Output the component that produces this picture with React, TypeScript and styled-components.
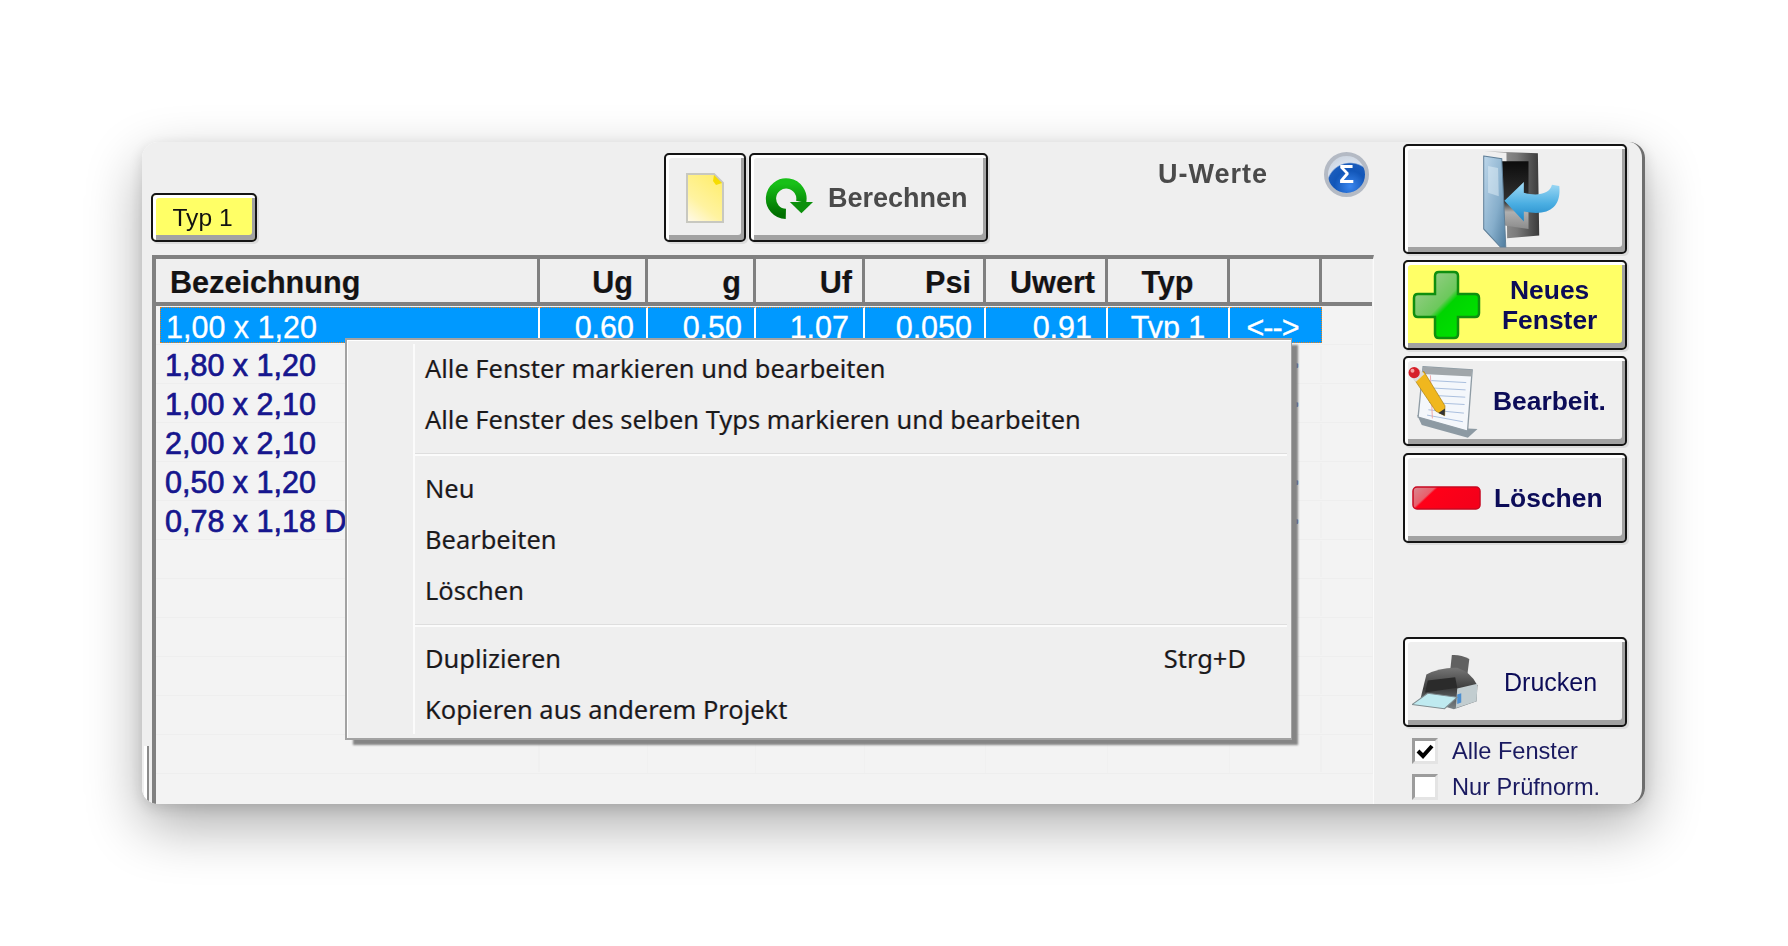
import React from "react"

import styled, { createGlobalStyle, css } from "styled-components"

const COLUMNS = "384px 108px 108px 109px 121px 122px 122px 92px 1fr"

const FRINGE = "-0.6px 0 rgba(200, 60, 0, 0.22), 0.6px 0 rgba(0, 80, 220, 0.22)"

const GlobalStyle = createGlobalStyle`
    html, body {
        margin: 0;
        background: #fff;
        overflow: hidden;
    }
    body {
        font-family: "Liberation Sans", Arial, sans-serif;
    }
`

const Page = styled.div`
    width: 1788px;
    height: 946px;
    padding: 142px 0 0 142px;
    box-sizing: border-box;
`

const Window = styled.div`
    position: relative;
    width: 1503px;
    height: 662px;
    border-radius: 16px;
    box-shadow: 0 22px 56px rgba(0, 0, 0, 0.32), 0 4px 14px rgba(0, 0, 0, 0.12);
`

const Surface = styled.div`
    display: flex;
    box-sizing: border-box;
    height: 100%;
    padding: 2px 15px 0 10px;
    overflow: hidden;
    background: #efefef;
    border-radius: 16px;
    border-right: 3px solid #6e6e6e;
    filter: blur(0.5px);

    &::before {
        content: "";
        position: absolute;
        left: 2px;
        bottom: 0;
        width: 3px;
        height: 58px;
        background: #fff;
        border-right: 2px solid #8a8a8a;
    }
`

const Main = styled.div`
    display: flex;
    flex-direction: column;
    width: 1222px;
    flex: none;
`

const Toolbar = styled.div`
    display: flex;
    align-items: flex-end;
    height: 111px;
    flex: none;
    padding-bottom: 13px;
    box-sizing: border-box;
`

const raised = css`
    box-sizing: border-box;
    border: 2px solid #141414;
    border-radius: 5px;
    box-shadow:
        inset 3px 3px 0 #fff,
        inset -3px -5px 0 #a2a2a2,
        2px 2px 0 #dcdcdc;
`

const TypeButton = styled.div`
    ${raised}
    display: flex;
    align-items: center;
    justify-content: center;
    width: 106px;
    height: 49px;
    margin-left: -1px;
    padding-right: 3px;
    background: #ffff66;
    color: #111;
    font-size: 24.6px;
`

const ToolGroup = styled.div`
    display: flex;
    gap: 3px;
    margin-left: 407px;
`

const ToolButton = styled.div<{ $wide?: boolean }>`
    ${raised}
    display: flex;
    align-items: center;
    justify-content: ${p => (p.$wide ? "flex-start" : "center")};
    gap: 15px;
    width: ${p => (p.$wide ? 239 : 82)}px;
    height: 89px;
    padding: ${p => (p.$wide ? "2px 0 0 14px" : "0")};
    background: #efefef;
    color: #4a4a4a;
    font-size: 27px;
    font-weight: 700;
`

const ValuesInfo = styled.div`
    display: flex;
    align-items: center;
    align-self: flex-start;
    gap: 56px;
    height: 60px;
    margin-left: 170px;
    color: #4a4a4a;
    font-size: 27px;
    font-weight: 700;
    letter-spacing: 1px;
`

const SigmaBadge = styled.div`
    display: flex;
    align-items: center;
    justify-content: center;
    width: 45px;
    height: 45px;
    box-sizing: border-box;
    border: 4px solid #b4bac4;
    border-radius: 50%;
    background: radial-gradient(circle at 60% 82%, #3a86ee 0%, #1256b8 42%, #1a5cbc 60%, #d7e0ec 64%, #c4ccd6 100%);
    color: #fff;
    font-size: 25px;
    font-weight: 700;
    letter-spacing: 0;
`

const Table = styled.div`
    position: relative;
    flex: 1;
    box-sizing: border-box;
    border-top: 4px solid #808080;
    border-left: 4px solid #808080;
    border-right: 1px solid #fbfbfb;
    background: #f3f3f3;
`

const HeadRow = styled.div`
    display: grid;
    grid-template-columns: ${COLUMNS};
    height: 47px;
    box-sizing: border-box;
    border-bottom: 4px solid #808080;
    margin-right: 1px;
    background: #efefef;
`

const HeadCell = styled.div<{ $align?: string; $pad?: number; $last?: boolean }>`
    box-sizing: border-box;
    padding: 2px ${p => p.$pad ?? 14}px 0;
    border-right: ${p => (p.$last ? "none" : "3px solid #808080")};
    color: #141414;
    font-size: 30.6px;
    font-weight: 700;
    line-height: 43px;
    text-align: ${p => p.$align ?? "right"};
    text-shadow: ${FRINGE};
`

const Row = styled.div`
    display: grid;
    grid-template-columns: ${COLUMNS};
    height: 39px;
    box-sizing: border-box;
    border-bottom: 1px solid #eeeeee;
`

const Cell = styled.div<{ $align?: string; $selected?: boolean; $first?: boolean; $edge?: boolean; $pad?: number }>`
    box-sizing: border-box;
    height: 36px;
    margin: 1px 0 0 ${p => (p.$first ? 4 : 0)}px;
    padding: 0 ${p => p.$pad ?? 12}px 0 ${p => (p.$first ? 5 : 0)}px;
    overflow: hidden;
    border-right: 2px solid ${p => (p.$selected && !p.$edge ? "#fff" : "#f0f0f0")};
    color: #16168e;
    font-size: 30.5px;
    line-height: 38px;
    white-space: nowrap;
    text-align: ${p => p.$align ?? "right"};
    -webkit-text-stroke: 0.7px #16168e;
    ${p =>
        p.$selected &&
        css`
            background: #0099ff;
            color: #fff;
            -webkit-text-stroke: 0.3px #fff;
            border-top: 1px dotted #e8801a;
            border-bottom: 1px dotted #e8801a;
        `}
    ${p => p.$selected && p.$first && "border-left: 1px dotted #e8801a;"}
    ${p => p.$selected && p.$edge && "border-right: 1px dotted #e8801a;"}
`

const ArrowCell = styled(Cell)`
    padding-right: 6px;
    letter-spacing: -1px;
`

const EmptyCell = styled.div`
    border-right: 1px solid #f0f0f0;
`

const Menu = styled.div`
    position: absolute;
    left: 189px;
    top: 79px;
    width: 947px;
    box-sizing: border-box;
    padding: 2px 0 4px;
    border: 2px solid #a2a2a2;
    border-right-width: 1px;
    background: #efefef;
    box-shadow: inset 1px 1px 0 #fff, 7px 6px 2px -1px #858585;
    color: #1b1b1b;
    font-family: "Noto Sans", "Open Sans", sans-serif;
    font-size: 25.45px;
    text-shadow: ${FRINGE};

    &::before {
        content: "";
        position: absolute;
        top: 4px;
        bottom: 4px;
        left: 66px;
        width: 2px;
        background: #fbfbfb;
    }
`

const MenuItem = styled.div`
    display: flex;
    align-items: center;
    justify-content: space-between;
    height: 51px;
    padding: 0 45px 0 78px;
`

const MenuDivider = styled.div<{ $height: number }>`
    height: ${p => p.$height}px;
    margin-left: 68px;
    margin-right: 4px;

    &::after {
        content: "";
        display: block;
        height: 1px;
        border-bottom: 2px solid #fbfbfb;
        background: #dedede;
        transform: translateY(9px);
    }
`

const Side = styled.div`
    display: flex;
    flex-direction: column;
    width: 224px;
    flex: none;
    margin-left: 29px;
`

const SideButton = styled.div<{ $height?: number; $gap?: number; $yellow?: boolean; $pad?: number; $plain?: boolean }>`
    ${raised}
    display: flex;
    align-items: center;
    flex: none;
    width: 224px;
    height: ${p => p.$height ?? 90}px;
    margin-top: ${p => p.$gap ?? 0}px;
    padding-left: ${p => p.$pad ?? 7}px;
    background: ${p => (p.$yellow ? "#ffff66" : "#efefef")};
    color: #0c0c58;
    font-size: ${p => (p.$plain ? 25 : 26.4)}px;
    font-weight: ${p => (p.$plain ? 400 : 700)};
`

const SideLabel = styled.div<{ $left: number }>`
    margin-left: ${p => p.$left}px;
    line-height: 30px;
    text-align: center;
`

const CheckRow = styled.div<{ $gap: number }>`
    display: flex;
    align-items: center;
    gap: 14px;
    height: 26px;
    margin: ${p => p.$gap}px 0 0 9px;
    color: #1a1a60;
    font-size: 23.6px;
`

const CheckBox = styled.div`
    display: flex;
    align-items: center;
    justify-content: center;
    width: 26px;
    height: 26px;
    box-sizing: border-box;
    border: 3px solid #e4e4e4;
    border-top-color: #9c9c9c;
    border-left-color: #9c9c9c;
    background: #fff;
`

const DoorIcon = () => (
    <svg width="77" height="97" viewBox="250 35 230 290">
        <defs>
            <linearGradient id="doorFrame" x1="0" y1="0" x2="1" y2="0">
                <stop offset="0" stopColor="#a8a8a8" />
                <stop offset="0.6" stopColor="#7a7a7a" />
                <stop offset="1" stopColor="#3a3a3a" />
            </linearGradient>
            <linearGradient id="doorDark" x1="0" y1="0" x2="0" y2="1">
                <stop offset="0" stopColor="#0c0c0c" />
                <stop offset="0.6" stopColor="#333" />
                <stop offset="0.75" stopColor="#b0b0b0" />
                <stop offset="1" stopColor="#8c8c8c" />
            </linearGradient>
            <linearGradient id="doorPanel" x1="0" y1="0" x2="1" y2="1">
                <stop offset="0" stopColor="#bcd6ea" />
                <stop offset="0.6" stopColor="#86aecb" />
                <stop offset="1" stopColor="#4f7c9e" />
            </linearGradient>
            <linearGradient id="doorArrow" x1="0" y1="0" x2="0" y2="1">
                <stop offset="0" stopColor="#a4dcf6" />
                <stop offset="0.55" stopColor="#4aaee2" />
                <stop offset="1" stopColor="#1f86c6" />
            </linearGradient>
        </defs>
        <path d="M252 36 L414 42 L418 288 L322 296 L320 40 Z" fill="url(#doorFrame)" />
        <path d="M305 66 L386 66 L386 268 L314 258 Z" fill="url(#doorDark)" />
        <path d="M252 50 L306 58 L318 322 L302 322 L252 268 Z" fill="url(#doorPanel)" stroke="#5f7f98" strokeWidth="3" />
        <path d="M265 80 L295 86 L297 170 L265 160 Z" fill="#e2eff8" opacity="0.5" />
        <path
            d="M314 184 L372 128 L372 160 C410 170 450 165 456 136 L478 140 C484 200 450 232 372 216 L372 246 Z"
            fill="url(#doorArrow)"
        />
    </svg>
)

const PlusIcon = () => (
    <svg width="69" height="70" viewBox="0 0 69 70">
        <defs>
            <linearGradient id="plusFill" x1="0" y1="0" x2="1" y2="1">
                <stop offset="0" stopColor="#a8cf98" />
                <stop offset="0.45" stopColor="#6cc85c" />
                <stop offset="0.52" stopColor="#00d400" />
                <stop offset="1" stopColor="#00e800" />
            </linearGradient>
        </defs>
        <path
            d="M27 2 H42 Q46 2 46 6 V24 H63 Q67 24 67 28 V43 Q67 47 63 47 H46 V64 Q46 68 42 68 H27 Q23 68 23 64 V47 H6 Q2 47 2 43 V28 Q2 24 6 24 H23 V6 Q23 2 27 2 Z"
            fill="url(#plusFill)"
            stroke="#0f8f0f"
            strokeWidth="2.5"
        />
    </svg>
)

const NotepadIcon = () => (
    <svg width="70" height="73" viewBox="25 45 210 220">
        <path d="M52 196 L205 236 L234 238 L205 264 L66 226 Z" fill="#8d9aa3" />
        <path d="M70 50 L218 60 L204 244 L55 202 Z" fill="#f4f7fb" stroke="#8f9ca5" strokeWidth="4" />
        <path d="M70 50 L218 60 L216 80 L68 72 Z" fill="#a0a6aa" />
        <path d="M95 92 L200 98 M92 114 L198 120 M90 136 L197 142 M88 158 L195 164 M86 180 L193 190 M82 196 L190 216" stroke="#a9bede" strokeWidth="3" />
        <path d="M92 76 L98 206" stroke="#ef9a9a" strokeWidth="2.5" />
        <path d="M46 92 L72 64 L136 168 L135 198 L108 184 Z" fill="#f0b71e" stroke="#a57c10" strokeWidth="2" />
        <path d="M116 190 L136 176 L135 198 Z" fill="#333" />
        <path d="M34 82 L60 58 L74 72 L48 96 Z" fill="#dcdcdc" />
        <circle cx="43" cy="68" r="17" fill="#d6202a" />
        <circle cx="38" cy="62" r="6" fill="#f4a0a0" />
    </svg>
)

const MinusIcon = () => (
    <svg width="69" height="24" viewBox="0 0 69 24">
        <defs>
            <linearGradient id="minusFill" x1="0" y1="0" x2="1" y2="0.35">
                <stop offset="0" stopColor="#d88a92" />
                <stop offset="0.3" stopColor="#e8606c" />
                <stop offset="0.34" stopColor="#ff0018" />
                <stop offset="1" stopColor="#f5001a" />
            </linearGradient>
        </defs>
        <rect x="1" y="1" width="67" height="22" rx="4" fill="url(#minusFill)" stroke="#c80820" strokeWidth="1.5" />
    </svg>
)

const PrinterIcon = () => (
    <svg width="67" height="57" viewBox="215 635 200 170">
        <defs>
            <linearGradient id="printerBody" x1="0" y1="0" x2="0" y2="1">
                <stop offset="0" stopColor="#767676" />
                <stop offset="0.5" stopColor="#3c3c3c" />
                <stop offset="1" stopColor="#7c8488" />
            </linearGradient>
        </defs>
        <path d="M334 638 Q360 636 386 650 L380 700 L328 694 Z" fill="#616161" />
        <path d="M258 696 Q300 674 350 676 Q392 690 410 728 L408 776 L340 800 L240 770 Z" fill="url(#printerBody)" />
        <path d="M350 738 L410 724 L408 776 L346 796 Z" fill="#c2cdd0" />
        <path d="M350 756 L362 752 L362 780 L350 784 Z" fill="#4d8fd0" />
        <path d="M215 786 L262 752 L350 764 L312 798 Z" fill="#bfeaf0" stroke="#7f8c90" strokeWidth="3" />
        <path d="M262 714 L344 704 L350 736 L254 750 Z" fill="#2b2b2b" />
    </svg>
)

const NoteIcon = () => (
    <svg width="38" height="50" viewBox="0 0 38 50">
        <defs>
            <linearGradient id="noteFill" x1="0.7" y1="0" x2="0.1" y2="1">
                <stop offset="0" stopColor="#ffee70" />
                <stop offset="0.6" stopColor="#fff3a0" />
                <stop offset="1" stopColor="#fff9e6" />
            </linearGradient>
        </defs>
        <path d="M1 1 H28 L37 10 V49 H1 Z" fill="url(#noteFill)" stroke="#c8c8c0" strokeWidth="2" />
        <path d="M28 2 L36 10 L30 12 L27 8 Z" fill="#f6dc00" />
    </svg>
)

const RefreshIcon = () => (
    <svg width="48" height="42" viewBox="315 78 145 126">
        <defs>
            <linearGradient id="refreshFill" x1="0" y1="0" x2="0" y2="1">
                <stop offset="0" stopColor="#18c018" />
                <stop offset="1" stopColor="#007000" />
            </linearGradient>
        </defs>
        <path d="M378 186 A46 46 0 1 1 424 150" fill="none" stroke="url(#refreshFill)" strokeWidth="31" />
        <path d="M390 150 H460 L425 184 Z" fill="#0c900c" />
    </svg>
)

const CheckMark = () => (
    <svg width="18" height="16" viewBox="0 0 18 16">
        <path d="M2 8 L7 13 L16 3" fill="none" stroke="#000" strokeWidth="4" />
    </svg>
)

const rows = [
    { name: "1,00 x 1,20", selected: true },
    { name: "1,80 x 1,20", arrow: true },
    { name: "1,00 x 2,10", arrow: true },
    { name: "2,00 x 2,10" },
    { name: "0,50 x 1,20", arrow: true },
    { name: "0,78 x 1,18 D", arrow: true },
    { name: "" },
    { name: "" },
    { name: "" },
    { name: "" },
    { name: "" },
    { name: "" },
]

const App = () => (
    <Page>
        <GlobalStyle />
        <Window>
            <Surface>
                <Main>
                    <Toolbar>
                        <TypeButton>Typ 1</TypeButton>
                        <ToolGroup>
                            <ToolButton>
                                <NoteIcon />
                            </ToolButton>
                            <ToolButton $wide>
                                <RefreshIcon />
                                Berechnen
                            </ToolButton>
                        </ToolGroup>
                        <ValuesInfo>
                            U-Werte
                            <SigmaBadge>Σ</SigmaBadge>
                        </ValuesInfo>
                    </Toolbar>
                    <Table>
                        <HeadRow>
                            <HeadCell $align="left">Bezeichnung</HeadCell>
                            <HeadCell $pad={12}>Ug</HeadCell>
                            <HeadCell $pad={12}>g</HeadCell>
                            <HeadCell $pad={10}>Uf</HeadCell>
                            <HeadCell $pad={12}>Psi</HeadCell>
                            <HeadCell $pad={10}>Uwert</HeadCell>
                            <HeadCell $align="center">Typ</HeadCell>
                            <HeadCell />
                            <HeadCell $last />
                        </HeadRow>
                        {rows.map((row, i) =>
                            row.selected ? (
                                <Row key={i}>
                                    <Cell $first $selected $align="left">{row.name}</Cell>
                                    <Cell $selected>0.60</Cell>
                                    <Cell $selected>0.50</Cell>
                                    <Cell $selected $pad={14}>1.07</Cell>
                                    <Cell $selected>0.050</Cell>
                                    <Cell $selected $pad={14}>0.91</Cell>
                                    <Cell $selected $align="center" $pad={0}>Typ 1</Cell>
                                    <ArrowCell $selected $edge $align="center">{"<-->"}</ArrowCell>
                                    <EmptyCell />
                                </Row>
                            ) : (
                                <Row key={i}>
                                    <Cell $first $align="left">{row.name}</Cell>
                                    <EmptyCell />
                                    <EmptyCell />
                                    <EmptyCell />
                                    <EmptyCell />
                                    <EmptyCell />
                                    <EmptyCell />
                                    <ArrowCell $edge $align="center">{row.arrow ? "<-->" : ""}</ArrowCell>
                                    <EmptyCell />
                                </Row>
                            )
                        )}
                        <Menu>
                            <MenuItem>Alle Fenster markieren und bearbeiten</MenuItem>
                            <MenuItem>Alle Fenster des selben Typs markieren und bearbeiten</MenuItem>
                            <MenuDivider $height={18} />
                            <MenuItem>Neu</MenuItem>
                            <MenuItem>Bearbeiten</MenuItem>
                            <MenuItem>Löschen</MenuItem>
                            <MenuDivider $height={17} />
                            <MenuItem>
                                <span>Duplizieren</span>
                                <span>Strg+D</span>
                            </MenuItem>
                            <MenuItem>Kopieren aus anderem Projekt</MenuItem>
                        </Menu>
                    </Table>
                </Main>
                <Side>
                    <SideButton $height={110} $pad={78}>
                        <DoorIcon />
                    </SideButton>
                    <SideButton $gap={6} $yellow>
                        <PlusIcon />
                        <SideLabel $left={21}>
                            Neues
                            <br />
                            Fenster
                        </SideLabel>
                    </SideButton>
                    <SideButton $gap={6} $pad={3}>
                        <NotepadIcon />
                        <SideLabel $left={15}>Bearbeit.</SideLabel>
                    </SideButton>
                    <SideButton $gap={7}>
                        <MinusIcon />
                        <SideLabel $left={13}>Löschen</SideLabel>
                    </SideButton>
                    <SideButton $gap={94} $plain>
                        <PrinterIcon />
                        <SideLabel $left={25}>Drucken</SideLabel>
                    </SideButton>
                    <CheckRow $gap={11}>
                        <CheckBox>
                            <CheckMark />
                        </CheckBox>
                        Alle Fenster
                    </CheckRow>
                    <CheckRow $gap={10}>
                        <CheckBox />
                        Nur Prüfnorm.
                    </CheckRow>
                </Side>
            </Surface>
        </Window>
    </Page>
)

export default App
